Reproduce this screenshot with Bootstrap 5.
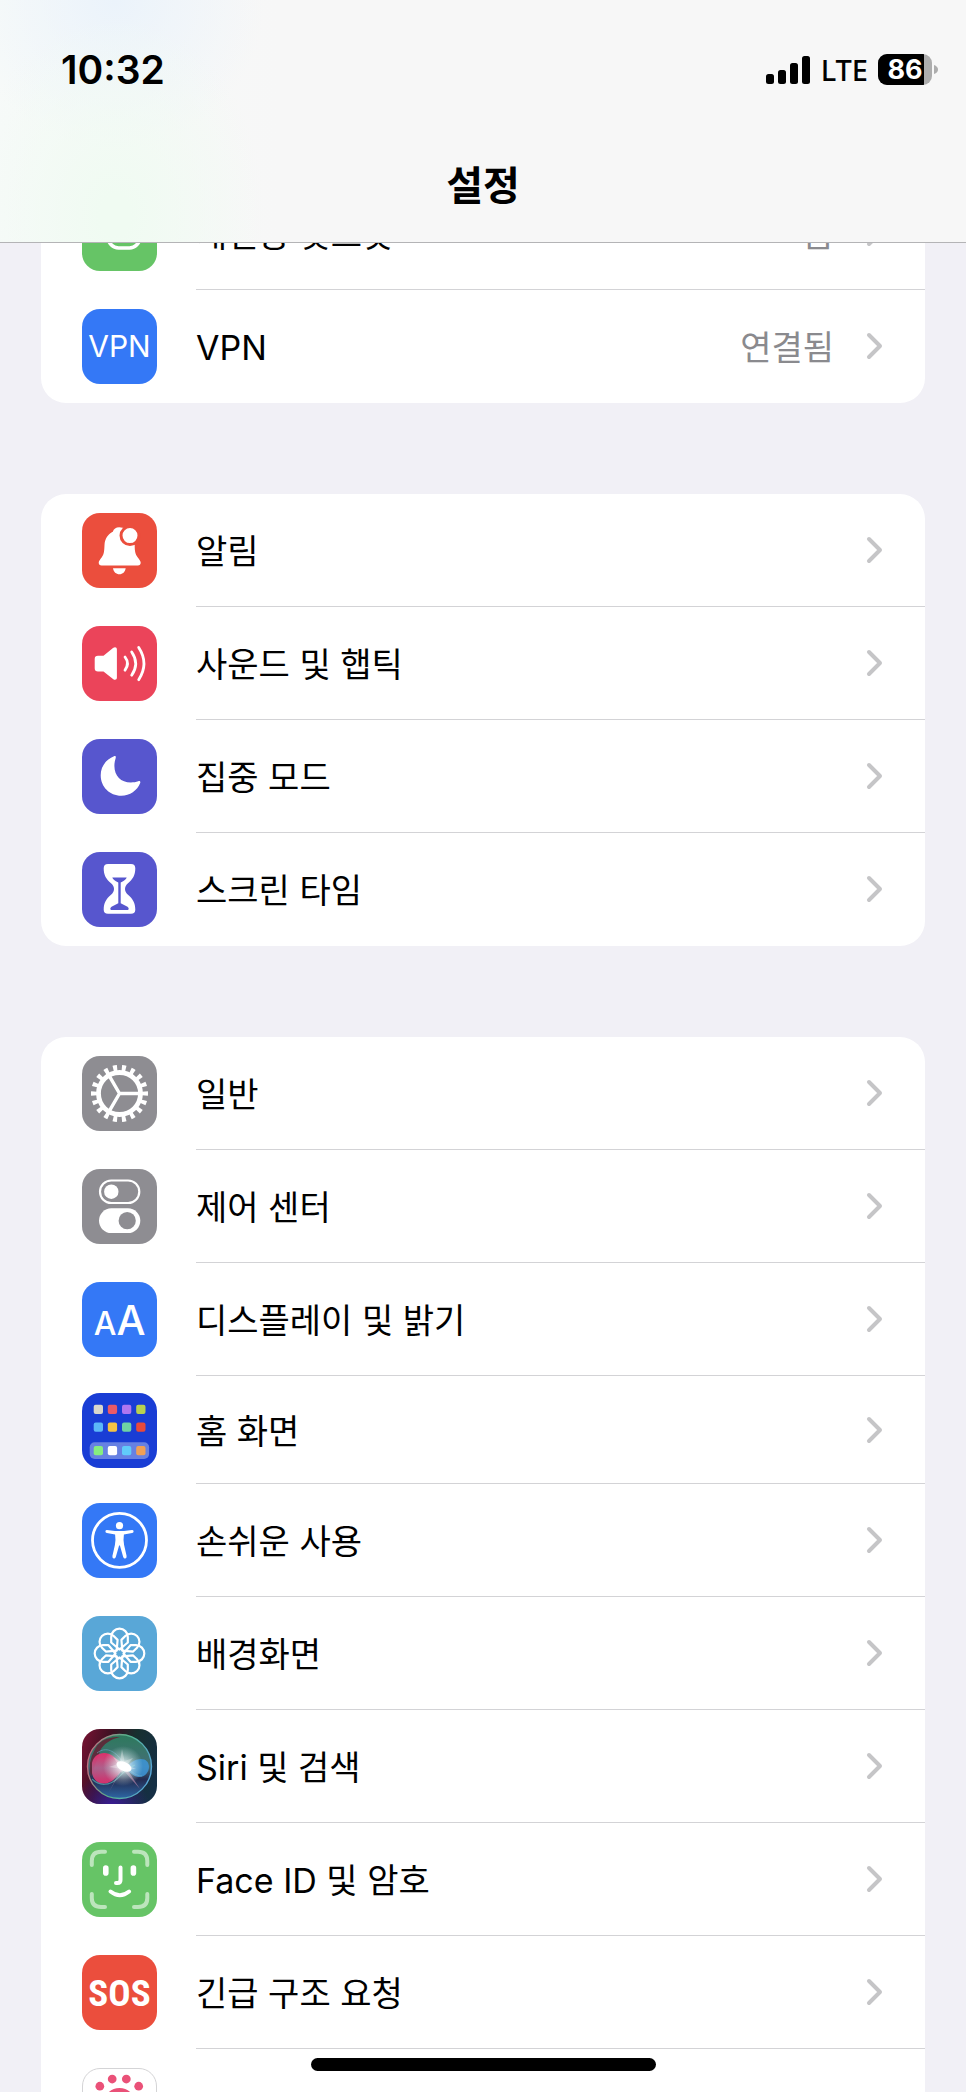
<!DOCTYPE html>
<html lang="ko">
<head>
<meta charset="utf-8">
<meta name="viewport" content="width=device-width, initial-scale=1">
<title>설정</title>
<link rel="stylesheet" href="https://cdn.jsdelivr.net/npm/bootstrap@5.3.0/dist/css/bootstrap.min.css">
<style>
  body {
    height: 100vh;
    overflow: hidden;
    background: #f1f0f6;
    color: #000;
    font-family: "Inter", "Noto Sans CJK KR", sans-serif;
    font-size: 34px;
    line-height: 44px;
  }
  .topbar {
    height: 243px;
    border-bottom: 1px solid #b4b4b6;
    background:
      radial-gradient(ellipse 150px 200px at 115px 215px, #f0fbf2 10%, rgba(240, 251, 242, 0) 100%),
      radial-gradient(ellipse 150px 150px at 115px 0, #ebf3fb 0, rgba(235, 243, 251, 0) 100%),
      linear-gradient(90deg, #f7faf9 0, #f7f7f7 280px);
  }
  .statusbar { height: 88px; margin-top: 24px; padding: 4px 26px 0 61px; }
  .clock { font-size: 39px; font-weight: 600; }
  .signals { gap: 10px; }
  .network { font-family: "Noto Sans", sans-serif; font-size: 29px; font-weight: 500; }
  .page-title { font-size: 40px; font-weight: 700; line-height: 48px; margin: 50px 0 0; }
  .settings { padding: 177px 41px 0; }
  .group { background: #fff; border-radius: 25px; margin-bottom: 91px; }
  .group-first { border-top-left-radius: 0; border-top-right-radius: 0; }
  .item { color: inherit; text-decoration: none; padding-left: 41px; gap: 39px; }
  .item-body { min-height: 113px; padding-right: 42px; border-bottom: 1px solid #d3d3d6; }
  .item-body > span { padding-top: 4px; }
  .item-short .item-body { min-height: 108px; }
  .group li:last-child .item-body { border-bottom-color: transparent; }
  .tile { width: 75px; height: 75px; border-radius: 18px; overflow: hidden; flex: none; display: block; }
  .value { color: #8a8a8e; margin-right: 32px; }
  .chevron { width: 17px; height: 28px; }
  .t-green { background: #66c466; }
  .t-blue { background: #3478f6; }
  .t-red { background: #eb4e3d; }
  .t-pink { background: #eb445a; }
  .t-indigo { background: #5756ce; }
  .t-gray { background: #8e8d92; }
  .t-navy { background: #193dd5; }
  .t-sky { background: #59a7d7; }
  .t-white { background: #fff; border: 1px solid #d4d4d6; }
  .home-indicator {
    position: fixed; left: 50%; bottom: 21px; margin-left: -172px;
    width: 345px; height: 13px; border-radius: 7px; background: #000; z-index: 1040;
  }
</style>
</head>
<body>
<svg class="d-none" aria-hidden="true">
  <symbol id="chev" viewBox="0 0 17 28"><path d="M3 3 14 14 3 25" fill="none" stroke="#c5c5c7" stroke-width="4" stroke-linecap="round" stroke-linejoin="round"/></symbol>
</svg>

<header class="topbar fixed-top">
  <div class="statusbar d-flex align-items-center justify-content-between">
    <span class="clock">10:32</span>
    <div class="signals d-flex align-items-center">
      <svg width="45" height="30" viewBox="0 0 45 30" aria-label="신호 강도">
        <rect x="0" y="19" width="8" height="10" rx="2.5"/><rect x="12" y="15" width="8" height="14" rx="2.5"/><rect x="24" y="8" width="8" height="21" rx="2.5"/><rect x="36" y="1" width="8" height="28" rx="2.5"/>
      </svg>
      <span class="network">LTE</span>
      <svg width="62" height="32" viewBox="0 0 62 32" aria-label="배터리">
        <clipPath id="cell"><rect x="0" y="0" width="54" height="31" rx="9"/></clipPath>
        <g clip-path="url(#cell)"><rect width="54" height="31" fill="#adadad"/><rect width="46" height="31"/></g>
        <path d="M56 11q4 1.500 4 4.500t-4 4.500z" fill="#adadad"/>
        <text x="27" y="25" text-anchor="middle" font-family="Inter, sans-serif" font-size="27" font-weight="700" fill="#fff">86</text>
      </svg>
    </div>
  </div>
  <h1 class="page-title text-center">설정</h1>
</header>

<main class="settings">
  <ul class="group group-first list-unstyled">
    <li><a class="item d-flex align-items-center" href="#">
      <svg class="tile t-green" viewBox="0 0 75 75"><g fill="none" stroke="#fff" stroke-width="3.600"><rect x="26.500" y="29" width="31" height="23" rx="10"/><rect x="17" y="23" width="31" height="19" rx="9.500"/></g></svg>
      <span class="item-body d-flex align-items-center flex-grow-1"><span class="flex-grow-1">개인용 핫스팟</span><span class="value">끔</span><svg class="chevron"><use href="#chev"/></svg></span></a></li>
    <li><a class="item d-flex align-items-center" href="#">
      <svg class="tile t-blue" viewBox="0 0 75 75"><text x="37.500" y="48" text-anchor="middle" font-size="30" font-weight="400" fill="#fff">VPN</text></svg>
      <span class="item-body d-flex align-items-center flex-grow-1"><span class="flex-grow-1">VPN</span><span class="value">연결됨</span><svg class="chevron"><use href="#chev"/></svg></span></a></li>
  </ul>

  <ul class="group list-unstyled">
    <li><a class="item d-flex align-items-center" href="#">
      <svg class="tile t-red" viewBox="0 0 75 75"><path d="M37.300 14.300c-3.500 0-5.500 1.700-6.500 4.400-5 2.300-8 7.300-8.300 13.300-.3 7-.5 9-2.700 12.200-1.600 2.300-3.100 3.500-3.100 5.600 0 1.500 1 2.700 2.900 2.700h36.200c1.900 0 2.900-1.200 2.900-2.700 0-2.100-1.500-3.300-3.100-5.600-2.200-3.200-2.900-5.200-2.900-12.200l-4.300-16z" fill="#fff"/><circle cx="48" cy="22.600" r="9" fill="#fff" stroke="#eb4e3d" stroke-width="3"/><path d="M31 55.300h12.700c-.6 3.700-3 6-6.300 6s-5.800-2.300-6.400-6z" fill="#fff"/></svg>
      <span class="item-body d-flex align-items-center flex-grow-1"><span class="flex-grow-1">알림</span><svg class="chevron"><use href="#chev"/></svg></span></a></li>
    <li><a class="item d-flex align-items-center" href="#">
      <svg class="tile t-pink" viewBox="0 0 75 75"><path d="M16 29.700h5.500l9.500-7.600c2-1.600 3.900-.8 3.900 1.400v28c0 2.200-1.900 3-3.900 1.400L21.500 45.500H16q-3.300 0-3.300-3.300V33q0-3.300 3.300-3.300z" fill="#fff"/><path d="M43 31q5 6.500 0 13.200M49.700 26q8 11.500 0 23.200M56.700 21.500q10.500 16 0 32.200" fill="none" stroke="#fff" stroke-width="2.800" stroke-linecap="round"/></svg>
      <span class="item-body d-flex align-items-center flex-grow-1"><span class="flex-grow-1">사운드 및 햅틱</span><svg class="chevron"><use href="#chev"/></svg></span></a></li>
    <li><a class="item d-flex align-items-center" href="#">
      <svg class="tile t-indigo" viewBox="0 0 75 75"><path d="M32 17.200c1.400-.6 2.200.3 1.700 1.700-1 3-1.300 5.500-1.300 8 0 10 6.500 16.500 16.500 16.500 2.700 0 5-.4 7.400-1.200 1.500-.5 2.400.4 1.900 1.800-3 7.600-10.300 12.700-18.900 12.700-11.700 0-20.600-8.900-20.600-20.500 0-8.500 5.300-16 13.300-19z" fill="#fff"/></svg>
      <span class="item-body d-flex align-items-center flex-grow-1"><span class="flex-grow-1">집중 모드</span><svg class="chevron"><use href="#chev"/></svg></span></a></li>
    <li><a class="item d-flex align-items-center" href="#">
      <svg class="tile t-indigo" viewBox="0 0 75 75"><path d="M26 12h23q4.300 0 4.300 4.300c0 7-2.600 11-7.300 15-4 3.500-4 8 0 11.500 4.700 4 7.300 8 7.300 15q0 4-4.300 4H26q-4.300 0-4.300-4c0-7 2.600-11 7.300-15 4-3.500 4-8 0-11.500-4.700-4-7.300-8-7.300-15Q21.700 12 26 12z" fill="#fff"/><path d="M30.300 25.500h14.400q-.7 2.500-6 5v20.700l6.800 3.500q2.300 2.200.3 3.300H29.200q-2-1.100.3-3.300l6.800-3.500V30.500q-5.300-2.500-6-5z" fill="#5756ce"/></svg>
      <span class="item-body d-flex align-items-center flex-grow-1"><span class="flex-grow-1">스크린 타임</span><svg class="chevron"><use href="#chev"/></svg></span></a></li>
  </ul>

  <ul class="group list-unstyled">
    <li><a class="item d-flex align-items-center" href="#">
      <svg class="tile t-gray" viewBox="0 0 75 75"><g fill="none" stroke="#fff"><circle cx="37.500" cy="37.500" r="25.500" stroke-width="6" pathLength="36" stroke-dasharray=".9 1.100" stroke-dashoffset=".45"/><circle cx="37.500" cy="37.500" r="21" stroke-width="4.800"/><path d="M37.500 37.500H57M37.500 37.500 27.700 20.600M37.500 37.500 27.700 54.400" stroke-width="3.400"/></g></svg>
      <span class="item-body d-flex align-items-center flex-grow-1"><span class="flex-grow-1">일반</span><svg class="chevron"><use href="#chev"/></svg></span></a></li>
    <li><a class="item d-flex align-items-center" href="#">
      <svg class="tile t-gray" viewBox="0 0 75 75"><rect x="18" y="11.500" width="39.300" height="22.500" rx="11.200" fill="none" stroke="#fff" stroke-width="2.200"/><circle cx="29.300" cy="22.700" r="7.200" fill="#fff"/><rect x="17" y="39.300" width="41.300" height="24.700" rx="12.300" fill="#fff"/><circle cx="45.200" cy="51.700" r="8.600" fill="#8e8d92"/></svg>
      <span class="item-body d-flex align-items-center flex-grow-1"><span class="flex-grow-1">제어 센터</span><svg class="chevron"><use href="#chev"/></svg></span></a></li>
    <li><a class="item d-flex align-items-center" href="#">
      <svg class="tile t-blue" viewBox="0 0 75 75"><g fill="#fff" text-anchor="middle"><text x="23" y="53" font-size="32" font-weight="500">A</text><text x="49" y="53" font-size="41" font-weight="500">A</text></g></svg>
      <span class="item-body d-flex align-items-center flex-grow-1"><span class="flex-grow-1">디스플레이 및 밝기</span><svg class="chevron"><use href="#chev"/></svg></span></a></li>
    <li class="item-short"><a class="item d-flex align-items-center" href="#">
      <svg class="tile t-navy" viewBox="0 0 75 75"><rect x="7.700" y="49.300" width="59.400" height="16.700" rx="5" fill="#6781e2"/>
        <g><rect x="11.700" y="11.700" width="9.300" height="9.300" rx="2" fill="#d9d6cc"/><rect x="25.800" y="11.700" width="9.300" height="9.300" rx="2" fill="#eb5a68"/><rect x="40" y="11.700" width="9.300" height="9.300" rx="2" fill="#b076f0"/><rect x="54.200" y="11.700" width="9.300" height="9.300" rx="2" fill="#b8d150"/>
        <rect x="11.700" y="29.500" width="9.300" height="9.300" rx="2" fill="#5cb8f8"/><rect x="25.800" y="29.500" width="9.300" height="9.300" rx="2" fill="#f5c343"/><rect x="40" y="29.500" width="9.300" height="9.300" rx="2" fill="#6fd3a4"/><rect x="54.200" y="29.500" width="9.300" height="9.300" rx="2" fill="#e74a3a"/>
        <rect x="11.700" y="53" width="9.300" height="9.300" rx="2" fill="#86ee80"/><rect x="25.800" y="53" width="9.300" height="9.300" rx="2" fill="#fff"/><rect x="40" y="53" width="9.300" height="9.300" rx="2" fill="#61cbfa"/><rect x="54.200" y="53" width="9.300" height="9.300" rx="2" fill="#f0a056"/></g></svg>
      <span class="item-body d-flex align-items-center flex-grow-1"><span class="flex-grow-1">홈 화면</span><svg class="chevron"><use href="#chev"/></svg></span></a></li>
    <li><a class="item d-flex align-items-center" href="#">
      <svg class="tile t-blue" viewBox="0 0 75 75"><circle cx="37.500" cy="37.300" r="27" fill="none" stroke="#fff" stroke-width="2.800"/><circle cx="37.500" cy="22.700" r="3.600" fill="#fff"/><path d="M25 27q-1.600 0-1.600 1.400t1.500 1.700l8.200 1.500q.8 5-.2 10.500L30.400 53q-.2 2 1.200 2.500t2.200-1.500l3.300-11.500h.8L41.200 54q.8 2 2.200 1.500t1.200-2.500l-2.500-10.900q-1-5.500-.2-10.500l8.200-1.500q1.500-.3 1.500-1.700T50 27l-8 1h-9z" fill="#fff"/></svg>
      <span class="item-body d-flex align-items-center flex-grow-1"><span class="flex-grow-1">손쉬운 사용</span><svg class="chevron"><use href="#chev"/></svg></span></a></li>
    <li><a class="item d-flex align-items-center" href="#">
      <svg class="tile t-sky" viewBox="0 0 75 75"><defs><path id="petal" d="M37.500 33.500 29.200 26.500V21a8.300 8.300 0 0 1 16.600 0V26.500z"/></defs><g fill="none" stroke="#fff" stroke-width="2.200" stroke-linejoin="round"><use href="#petal"/><use href="#petal" transform="rotate(45 37.500 37.500)"/><use href="#petal" transform="rotate(90 37.500 37.500)"/><use href="#petal" transform="rotate(135 37.500 37.500)"/><use href="#petal" transform="rotate(180 37.500 37.500)"/><use href="#petal" transform="rotate(225 37.500 37.500)"/><use href="#petal" transform="rotate(270 37.500 37.500)"/><use href="#petal" transform="rotate(315 37.500 37.500)"/><circle cx="37.500" cy="37.500" r="4.600"/></g></svg>
      <span class="item-body d-flex align-items-center flex-grow-1"><span class="flex-grow-1">배경화면</span><svg class="chevron"><use href="#chev"/></svg></span></a></li>
    <li><a class="item d-flex align-items-center" href="#">
      <svg class="tile" viewBox="0 0 75 75">
        <defs>
          <linearGradient id="sb" x1="0" y1=".3" x2="1" y2=".6"><stop offset="0" stop-color="#6d1230"/><stop offset=".3" stop-color="#3c1122"/><stop offset=".6" stop-color="#17302f"/><stop offset="1" stop-color="#152f45"/></linearGradient>
          <radialGradient id="sv" cx=".4" cy="1.050" r=".5"><stop offset="0" stop-color="#3c1a9a"/><stop offset="1" stop-color="#3c1a9a" stop-opacity="0"/></radialGradient>
          <linearGradient id="so" x1="0" y1="0" x2="0" y2="1"><stop offset="0" stop-color="#2d7a5c"/><stop offset=".5" stop-color="#456e78"/><stop offset=".7" stop-color="#232a50"/><stop offset="1" stop-color="#2d67a5"/></linearGradient>
          <linearGradient id="sr" x1="0" y1=".3" x2="1" y2=".6"><stop offset="0" stop-color="#c8687e"/><stop offset=".5" stop-color="#54b48c"/><stop offset="1" stop-color="#58a5d8"/></linearGradient>
          <linearGradient id="sp" x1="0" y1="0" x2="0" y2="1"><stop offset="0" stop-color="#f0286a"/><stop offset=".5" stop-color="#b8608e"/><stop offset="1" stop-color="#e82f6e"/></linearGradient>
          <radialGradient id="sg"><stop offset="0" stop-color="#fff"/><stop offset=".25" stop-color="#f4ffff" stop-opacity=".9"/><stop offset="1" stop-color="#c5e8e4" stop-opacity="0"/></radialGradient>
        </defs>
        <rect width="75" height="75" fill="url(#sb)"/><rect width="75" height="75" fill="url(#sv)"/>
        <circle cx="37.500" cy="37.500" r="32" fill="url(#so)" stroke="url(#sr)" stroke-width="1.400"/>
        <path d="M13 20C18 10 28 8 38 8c-9 2-17 7-20 14L9 48Q5 34 13 20z" fill="#651c31" opacity=".8"/>
        <path d="M10 34c2-10 13-13 21-7 5 4 8 8 12 11-5 5-8 10-13 14-8 5-18 3-20-8z" fill="url(#sp)" opacity=".9"/>
        <path d="M42 39c6-4 10-9 17-9 5 0 8 3 8 8s-4 10-10 10c-5 0-9-5-15-9z" fill="#3d95d8" opacity=".85"/>
        <path d="M10 50c8 8 18 6 25 0 6-6 10-11 18-14" fill="none" stroke="#67c6c4" stroke-width="1.200" opacity=".6"/>
        <path d="M15 24c9-7 18-2 25 8 7 9 13 15 20 15" fill="none" stroke="#6da8c4" stroke-width="1" opacity=".6"/>
        <path d="M39 42 27 63 37 44zM45 40 58 60 43 43z" fill="#d394b8" opacity=".55"/>
        <circle cx="41" cy="37" r="20" fill="url(#sg)" opacity=".8"/>
        <path d="m40 20 2.500 12L51 29l-6 7 9 4-11 .5L40 44l-3-4.500L27 38l9-3-5-7 7 4z" fill="#fff" opacity=".3"/><ellipse cx="42" cy="37.500" rx="8" ry="4.500" fill="#fff" transform="rotate(25 42 37.500)"/>
      </svg>
      <span class="item-body d-flex align-items-center flex-grow-1"><span class="flex-grow-1">Siri 및 검색</span><svg class="chevron"><use href="#chev"/></svg></span></a></li>
    <li><a class="item d-flex align-items-center" href="#">
      <svg class="tile t-green" viewBox="0 0 75 75"><g fill="none" stroke="#fff" stroke-width="4" stroke-linecap="round"><path d="M9.800 23V19q0-9.300 9.300-9.300H23M52 9.700h4q9.300 0 9.300 9.300v4M65.300 52v4q0 9-9.300 9h-4M23 65h-4q-9.200 0-9.200-9v-4" stroke="#bce5bc"/><path d="M38.500 25.500V38q0 3-3 3h-1.500M28.500 49.500q9.400 7.500 18.600 0"/></g><rect x="21" y="23.300" width="5.600" height="10.400" rx="2.800" fill="#fff"/><rect x="48.600" y="23.300" width="5.600" height="10.400" rx="2.800" fill="#fff"/></svg>
      <span class="item-body d-flex align-items-center flex-grow-1"><span class="flex-grow-1">Face ID 및 암호</span><svg class="chevron"><use href="#chev"/></svg></span></a></li>
    <li><a class="item d-flex align-items-center" href="#">
      <svg class="tile t-red" viewBox="0 0 75 75"><text x="37.500" y="51" text-anchor="middle" font-family="'Liberation Sans Narrow', 'Roboto Condensed', 'Open Sans Condensed', Lato, sans-serif" font-size="37" font-weight="700" fill="#fff">SOS</text></svg>
      <span class="item-body d-flex align-items-center flex-grow-1"><span class="flex-grow-1">긴급 구조 요청</span><svg class="chevron"><use href="#chev"/></svg></span></a></li>
    <li><a class="item d-flex align-items-center" href="#" aria-label="노출 알림">
      <svg class="tile t-white" viewBox="0 0 75 75"><g fill="#ea5178"><circle cx="17.300" cy="17.700" r="4.500"/><circle cx="30" cy="10.300" r="4.500"/><circle cx="44.500" cy="10.300" r="4.500"/><circle cx="57.200" cy="17.700" r="4.500"/><circle cx="37.500" cy="36" r="16.500"/></g></svg>
      <span class="item-body flex-grow-1"></span></a></li>
  </ul>
</main>

<div class="home-indicator"></div>
<script src="https://cdn.jsdelivr.net/npm/bootstrap@5.3.0/dist/js/bootstrap.bundle.min.js"></script>
</body>
</html>
